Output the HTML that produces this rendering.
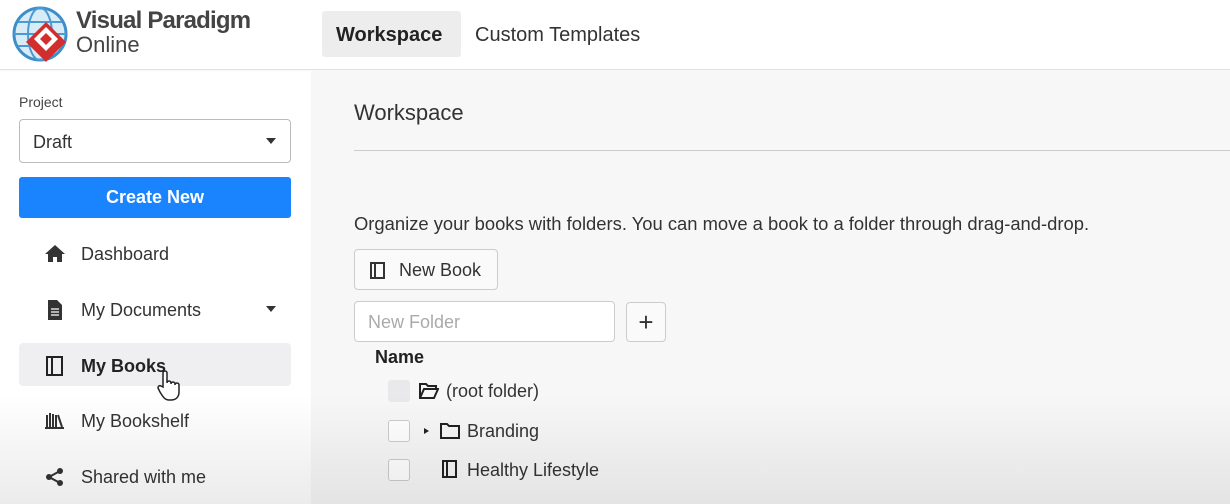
<!DOCTYPE html>
<html style="overflow:hidden;height:504px"><head><meta charset="utf-8"><style>
*{box-sizing:border-box;margin:0;padding:0}
body{width:1230px;height:504px;overflow:hidden;font-family:"Liberation Sans",sans-serif;background:#f8f8f8;position:relative;color:#222}
.hdr{position:absolute;left:0;top:0;width:1230px;height:70px;background:#fff;border-bottom:1px solid #e2e2e2}
.side{position:absolute;left:0;top:71px;width:311px;height:433px;background:#fff}
.main{position:absolute;left:311px;top:71px;right:0;bottom:0;background:#f7f7f7}
.t{position:absolute;white-space:nowrap}
.nav{position:absolute;left:44px;width:220px;height:22px;font-size:18px;color:#333;white-space:nowrap}
.nav span{position:absolute;left:37px;top:0}
.vig{position:absolute;left:0;right:0;bottom:0;height:110px;background:linear-gradient(rgba(0,0,0,0),rgba(0,0,0,0.08));pointer-events:none}
.cb{position:absolute;left:388px;width:22px;height:22px;border:1px solid #ccc;border-radius:3px;background:#fff}
</style></head><body>
<div class="hdr">
<svg style="position:absolute;left:12px;top:6px" width="60" height="58" viewBox="0 0 60 58">
<circle cx="28" cy="28" r="26" fill="#d8ecf8" stroke="#3d8ec9" stroke-width="3"/>
<ellipse cx="28" cy="28" rx="12" ry="26" fill="none" stroke="#4a9ad3" stroke-width="2"/>
<line x1="2" y1="28" x2="54" y2="28" stroke="#4a9ad3" stroke-width="2"/>
<line x1="6" y1="16" x2="50" y2="16" stroke="#4a9ad3" stroke-width="2"/>
<line x1="6" y1="40" x2="50" y2="40" stroke="#4a9ad3" stroke-width="2"/>
<path d="M14 36 L34 16 L54 36 L34 56 Z" fill="#d32e2e"/>
<path d="M22 33 L34 21 L46 33 L34 45Z" fill="#fff"/>
<path d="M28 33 L34 27 L40 33 L34 39Z" fill="#d32e2e"/>
</svg>
<div class="t" style="left:76px;top:7px;font-size:24px;font-weight:bold;color:#444;letter-spacing:-0.8px">Visual Paradigm</div>
<div class="t" style="left:76px;top:32px;font-size:22px;color:#444">Online</div>
<div style="position:absolute;left:322px;top:11px;width:139px;height:46px;background:#ededed;border-radius:3px"></div>
<div class="t" style="left:336px;top:24px;font-size:20px;font-weight:bold;color:#222">Workspace</div>
<div class="t" style="left:475px;top:24px;font-size:20px;color:#333">Custom Templates</div>
</div>
<div class="side">
<div class="t" style="left:19px;top:23px;font-size:14px;color:#444">Project</div>
<div style="position:absolute;left:19px;top:48px;width:272px;height:44px;border:1px solid #bbb;border-radius:4px"></div>
<div class="t" style="left:33px;top:61px;font-size:18px;color:#333">Draft</div>
<div style="position:absolute;left:266px;top:67px;border:5px solid transparent;border-top:6px solid #333"></div>
<div style="position:absolute;left:19px;top:106px;width:272px;height:41px;background:#1a84ff;border-radius:3px;color:#fff;font-weight:bold;font-size:18px;text-align:center;line-height:41px">Create New</div>
<div class="nav" style="top:173px"><svg width="22" height="20" viewBox="0 0 22 20"><path d="M11 1L1 10h3v8h5v-5h4v5h5v-8h3z" fill="#333"/></svg><span>Dashboard</span></div>
<div class="nav" style="top:229px"><svg width="22" height="20" viewBox="0 0 22 20"><path d="M4 0h9l5 5v15H4z" fill="#333"/><path d="M7 9h8M7 12h8M7 15h8" stroke="#fff" stroke-width="1.3"/></svg><span>My Documents</span></div>
<div style="position:absolute;left:266px;top:235px;border:5px solid transparent;border-top:6px solid #333"></div>
<div style="position:absolute;left:19px;top:272px;width:272px;height:43px;background:#efeff1;border-radius:4px"></div>
<div class="nav" style="top:285px;font-weight:bold;color:#222"><svg width="22" height="20" viewBox="0 0 22 20"><rect x="3" y="1" width="15" height="18" fill="none" stroke="#222" stroke-width="2"/><line x1="8" y1="1" x2="8" y2="19" stroke="#222" stroke-width="2"/></svg><span>My Books</span></div>
<div class="nav" style="top:340px"><svg width="22" height="20" viewBox="0 0 22 20"><path d="M3 4v12M6 2v14M9 3v13M12 4v12" stroke="#333" stroke-width="2"/><path d="M14 4l4 12" stroke="#333" stroke-width="2"/><line x1="1" y1="17" x2="20" y2="17" stroke="#333" stroke-width="2"/></svg><span>My Bookshelf</span></div>
<div class="nav" style="top:396px"><svg width="22" height="20" viewBox="0 0 22 20"><circle cx="16" cy="4" r="3" fill="#333"/><circle cx="5" cy="10" r="3" fill="#333"/><circle cx="16" cy="16" r="3" fill="#333"/><path d="M16 4L5 10L16 16" stroke="#333" stroke-width="2" fill="none"/></svg><span>Shared with me</span></div>
<svg style="position:absolute;left:157px;top:298px" width="26" height="32" viewBox="0 0 26 32"><path d="M6 18V4a2 2 0 014 0v10a2 2 0 014 0v1a2 2 0 014 0v1a2 2 0 014 0v7c0 5-3 8-8 8h-2c-4 0-6-3-9-8l-2-4a2 2 0 013-2z" fill="#fff" stroke="#222" stroke-width="1.5"/></svg>
</div>
<div class="main">
<div class="t" style="left:43px;top:29px;font-size:22px;color:#333">Workspace</div>
<div style="position:absolute;left:43px;top:79px;right:0;height:1px;background:#ccc"></div>
<div class="t" style="left:43px;top:142px;font-size:18.4px;color:#333">Organize your books with folders. You can move a book to a folder through drag-and-drop.</div>
<div style="position:absolute;left:43px;top:178px;width:144px;height:41px;border:1px solid #ccc;border-radius:4px;background:#fafafa"></div>
<svg style="position:absolute;left:59px;top:191px" width="16" height="17"><rect x="1" y="1" width="13" height="15" fill="none" stroke="#333" stroke-width="2"/><line x1="5" y1="1" x2="5" y2="16" stroke="#333" stroke-width="2"/></svg>
<div class="t" style="left:88px;top:189px;font-size:18px;color:#333">New Book</div>
<div style="position:absolute;left:43px;top:230px;width:261px;height:41px;border:1px solid #ccc;border-radius:4px;background:#fff"></div>
<div class="t" style="left:57px;top:241px;font-size:18px;color:#aaa">New Folder</div>
<div style="position:absolute;left:315px;top:231px;width:40px;height:40px;border:1px solid #ccc;border-radius:4px;background:#fafafa;font-size:26px;text-align:center;line-height:38px;color:#333">+</div>
<div class="t" style="left:64px;top:276px;font-size:18px;font-weight:bold;color:#222">Name</div>
</div>
<div class="cb" style="top:380px;background:#e9e9ec;border-color:#e9e9ec"></div>
<svg style="position:absolute;left:419px;top:382px" width="20" height="18"><path d="M1 2h6l2 2h8v3H5L1 16V2zM5 7h14l-4 9H1z" fill="none" stroke="#222" stroke-width="2"/></svg>
<div class="t" style="left:446px;top:381px;font-size:18px;color:#333">(root folder)</div>
<div class="cb" style="top:420px"></div>
<div style="position:absolute;left:424px;top:428px;border:3.5px solid transparent;border-left:5px solid #222"></div>
<svg style="position:absolute;left:440px;top:422px" width="20" height="17"><path d="M1 2h6l2 2h10v12H1z" fill="none" stroke="#222" stroke-width="2"/></svg>
<div class="t" style="left:467px;top:421px;font-size:18px;color:#333">Branding</div>
<div class="cb" style="top:459px"></div>
<svg style="position:absolute;left:442px;top:460px" width="16" height="18"><rect x="1" y="1" width="13" height="16" fill="none" stroke="#222" stroke-width="2"/><line x1="5" y1="1" x2="5" y2="17" stroke="#222" stroke-width="2"/></svg>
<div class="t" style="left:467px;top:460px;font-size:18px;color:#333">Healthy Lifestyle</div>
<div class="vig"></div>
</body></html>
